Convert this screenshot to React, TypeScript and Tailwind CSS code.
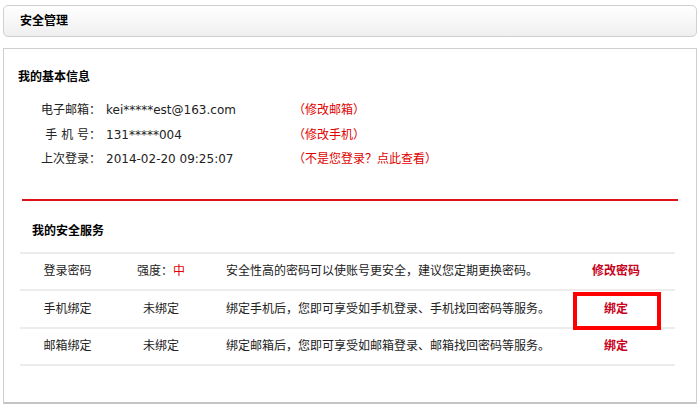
const font = { fontFamily: '"DejaVu Sans", "Noto Sans CJK SC", sans-serif' };

type Service = {
  name: string;
  status: React.ReactNode;
  desc: string;
  action: string;
};

const services: Service[] = [
  {
    name: "登录密码",
    status: (
      <>
        强度：<span className="text-[#e00000]">中</span>
      </>
    ),
    desc: "安全性高的密码可以使账号更安全，建议您定期更换密码。",
    action: "修改密码",
  },
  {
    name: "手机绑定",
    status: "未绑定",
    desc: "绑定手机后，您即可享受如手机登录、手机找回密码等服务。",
    action: "绑定",
  },
  {
    name: "邮箱绑定",
    status: "未绑定",
    desc: "绑定邮箱后，您即可享受如邮箱登录、邮箱找回密码等服务。",
    action: "绑定",
  },
];

function InfoRow({ label, value, link }: { label: string; value: string; link: string }) {
  return (
    <div className="flex h-[24.5px] items-center text-[12px]">
      <div className="w-[97px] text-right whitespace-pre text-[#222]">{label}</div>
      <div className="w-[192px] pl-[5px] text-[#222]">{value}</div>
      <a className="cursor-pointer text-[#e00000]">{link}</a>
    </div>
  );
}

export default function App() {
  return (
    <div className="w-[700px] h-[405px] bg-white px-[3px] pt-[5px]" style={font}>
      <div className="h-[32px] rounded-[5px] border border-[#d0d0d0] bg-gradient-to-b from-white to-[#efefef] flex items-center pl-[16px]">
        <span className="text-[12px] font-bold text-black">安全管理</span>
      </div>

      <div className="mt-[11px] h-[356px] border border-[#cfcfcf] border-b-2 border-b-[#c4c4c4] bg-white">
        <div className="pl-[14px] pt-[18px]">
          <div className="h-[20px] leading-[20px] text-[12px] font-bold text-black">我的基本信息</div>
          <div className="mt-[11px] -ml-[14px]">
            <InfoRow label="电子邮箱：" value="kei*****est@163.com" link="（修改邮箱）" />
            <InfoRow label="手 机 号：" value="131*****004" link="（修改手机）" />
            <InfoRow label="上次登录：" value="2014-02-20 09:25:07" link="（不是您登录？点此查看）" />
          </div>
        </div>

        <div className="mx-[18px] mt-[27px] h-[2px] bg-[#e0101c]" />

        <div className="pl-[28px] mt-[20px] h-[20px] leading-[20px] text-[12px] font-bold text-black">我的安全服务</div>

        <div className="relative ml-[16px] mr-[21px] mt-[11px] border-t-2 border-[#ececec] text-[12px] text-[#222]">
          {services.map((s) => (
            <div key={s.name} className="flex h-[37.5px] items-center border-b-2 border-[#ececec]">
              <div className="w-[95px] text-center">{s.name}</div>
              <div className="w-[92px] text-center">{s.status}</div>
              <div className="w-[350px] pl-[19px]">{s.desc}</div>
              <div className="flex-1 text-center font-bold text-[#c8001a]">{s.action}</div>
            </div>
          ))}
          <div className="absolute left-[553px] top-[38px] w-[88px] h-[38px] border-4 border-[#ff0000]" />
        </div>
      </div>
    </div>
  );
}
